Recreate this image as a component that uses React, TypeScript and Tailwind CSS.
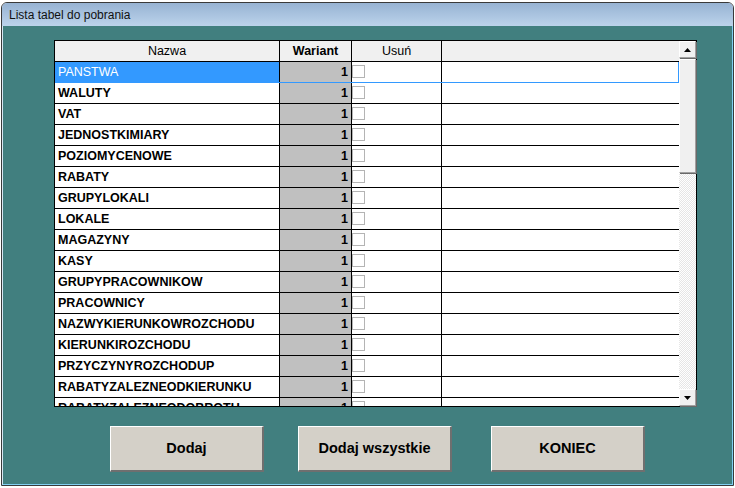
const TABLES = [
  "PANSTWA",
  "WALUTY",
  "VAT",
  "JEDNOSTKIMIARY",
  "POZIOMYCENOWE",
  "RABATY",
  "GRUPYLOKALI",
  "LOKALE",
  "MAGAZYNY",
  "KASY",
  "GRUPYPRACOWNIKOW",
  "PRACOWNICY",
  "NAZWYKIERUNKOWROZCHODU",
  "KIERUNKIROZCHODU",
  "PRZYCZYNYROZCHODUP",
  "RABATYZALEZNEODKIERUNKU",
  "RABATYZALEZNEODOBROTU",
];

function Arrow({ down }: { down?: boolean }) {
  return (
    <svg width="7" height="4" viewBox="0 0 7 4">
      {down ? <polygon points="0,0 7,0 3.5,4" fill="#000" /> : <polygon points="0,4 7,4 3.5,0" fill="#000" />}
    </svg>
  );
}

function ScrollButton({ down }: { down?: boolean }) {
  return (
    <div className="h-[17px] w-[17px] shrink-0 flex items-center justify-center bg-[#f0f0f0] border-t border-l border-white border-b border-r border-b-[#a0a0a0] border-r-[#a0a0a0] shadow-[1px_1px_0_#696969]">
      <Arrow down={down} />
    </div>
  );
}

function Row({ name, selected }: { name: string; selected: boolean }) {
  const line = selected ? "border-[#3399ff]" : "border-black";
  return (
    <div className={`flex h-[21px] shrink-0 border-b ${line}`}>
      <div
        className={`w-[225px] border-r border-r-black pl-[3px] pt-[1px] flex items-center whitespace-nowrap overflow-hidden ${
          selected ? "bg-[#3399ff] text-white font-normal" : "bg-white text-black font-bold"
        }`}
      >
        {name}
      </div>
      <div className="w-[72px] border-r border-black bg-[#c0c0c0] pr-[3px] pt-[1px] flex items-center justify-end font-bold">
        1
      </div>
      <div className="w-[90px] border-r border-black bg-white pt-[3px]">
        <div className="w-[13px] h-[13px] border border-[#b4b4b4] bg-white" />
      </div>
      <div className={`flex-1 bg-white ${selected ? "border-r border-[#3399ff]" : ""}`} />
    </div>
  );
}

function WinButton({ label, className }: { label: string; className?: string }) {
  return (
    <button
      className={`w-[154px] h-[46px] bg-[#d4d0c8] border-t border-l border-white border-b-2 border-r-2 border-b-[#6f6f6f] border-r-[#6f6f6f] text-[14.5px] font-bold text-black ${className ?? ""}`}
    >
      {label}
    </button>
  );
}

export default function App() {
  return (
    <div className="w-[735px] h-[488px] bg-white overflow-hidden font-['Liberation_Sans',Arial,sans-serif] text-[12.5px]">
      <div className="mt-[2px] ml-[1px] w-[733px] h-[484px] border border-[#3a3a3a] rounded-t-[6px] overflow-hidden flex flex-col">
        {/* title bar */}
        <div className="h-[23px] shrink-0 bg-gradient-to-b from-[#97b3d3] to-[#bcd3eb] pl-[7px] flex items-center text-[12px] text-[#111]">
          Lista tabel do pobrania
        </div>

        <div className="flex-1 bg-[#417f7f] border-l border-l-[#d8e6f2] border-r border-b border-r-[#7fd0f2] border-b-[#7fd0f2] flex flex-col">
          {/* grid */}
          <div className="mt-[14px] ml-[51px] w-[643px] h-[367px] border border-black flex">
            <div className="w-[624px] flex flex-col overflow-hidden">
              <div className="flex h-[21px] shrink-0 border-b border-black bg-[#f0f0f0] text-[12.5px]">
                <div className="w-[225px] border-r border-black flex items-center justify-center">Nazwa</div>
                <div className="w-[72px] border-r border-black flex items-center justify-center font-bold">
                  Wariant
                </div>
                <div className="w-[90px] border-r border-black flex items-center justify-center">Usuń</div>
                <div className="flex-1" />
              </div>
              {TABLES.map((name, i) => (
                <Row key={name} name={name} selected={i === 0} />
              ))}
            </div>

            {/* scrollbar */}
            <div className="w-[17px] flex flex-col bg-[repeating-conic-gradient(#e6e6e6_0_25%,#ffffff_0_50%)] bg-[length:2px_2px]">
              <ScrollButton />
              <div className="h-[114px] mt-[1px] shrink-0 bg-[#f0f0f0] border-t border-l border-white border-b border-r border-b-[#a0a0a0] border-r-[#a0a0a0] shadow-[1px_1px_0_#696969]" />
              <div className="flex-1" />
              <ScrollButton down />
            </div>
          </div>

          {/* buttons */}
          <div className="mt-[19px] ml-[107px] flex">
            <WinButton label="Dodaj" />
            <WinButton label="Dodaj wszystkie" className="ml-[34px]" />
            <WinButton label="KONIEC" className="ml-[39px]" />
          </div>
        </div>
      </div>
    </div>
  );
}
